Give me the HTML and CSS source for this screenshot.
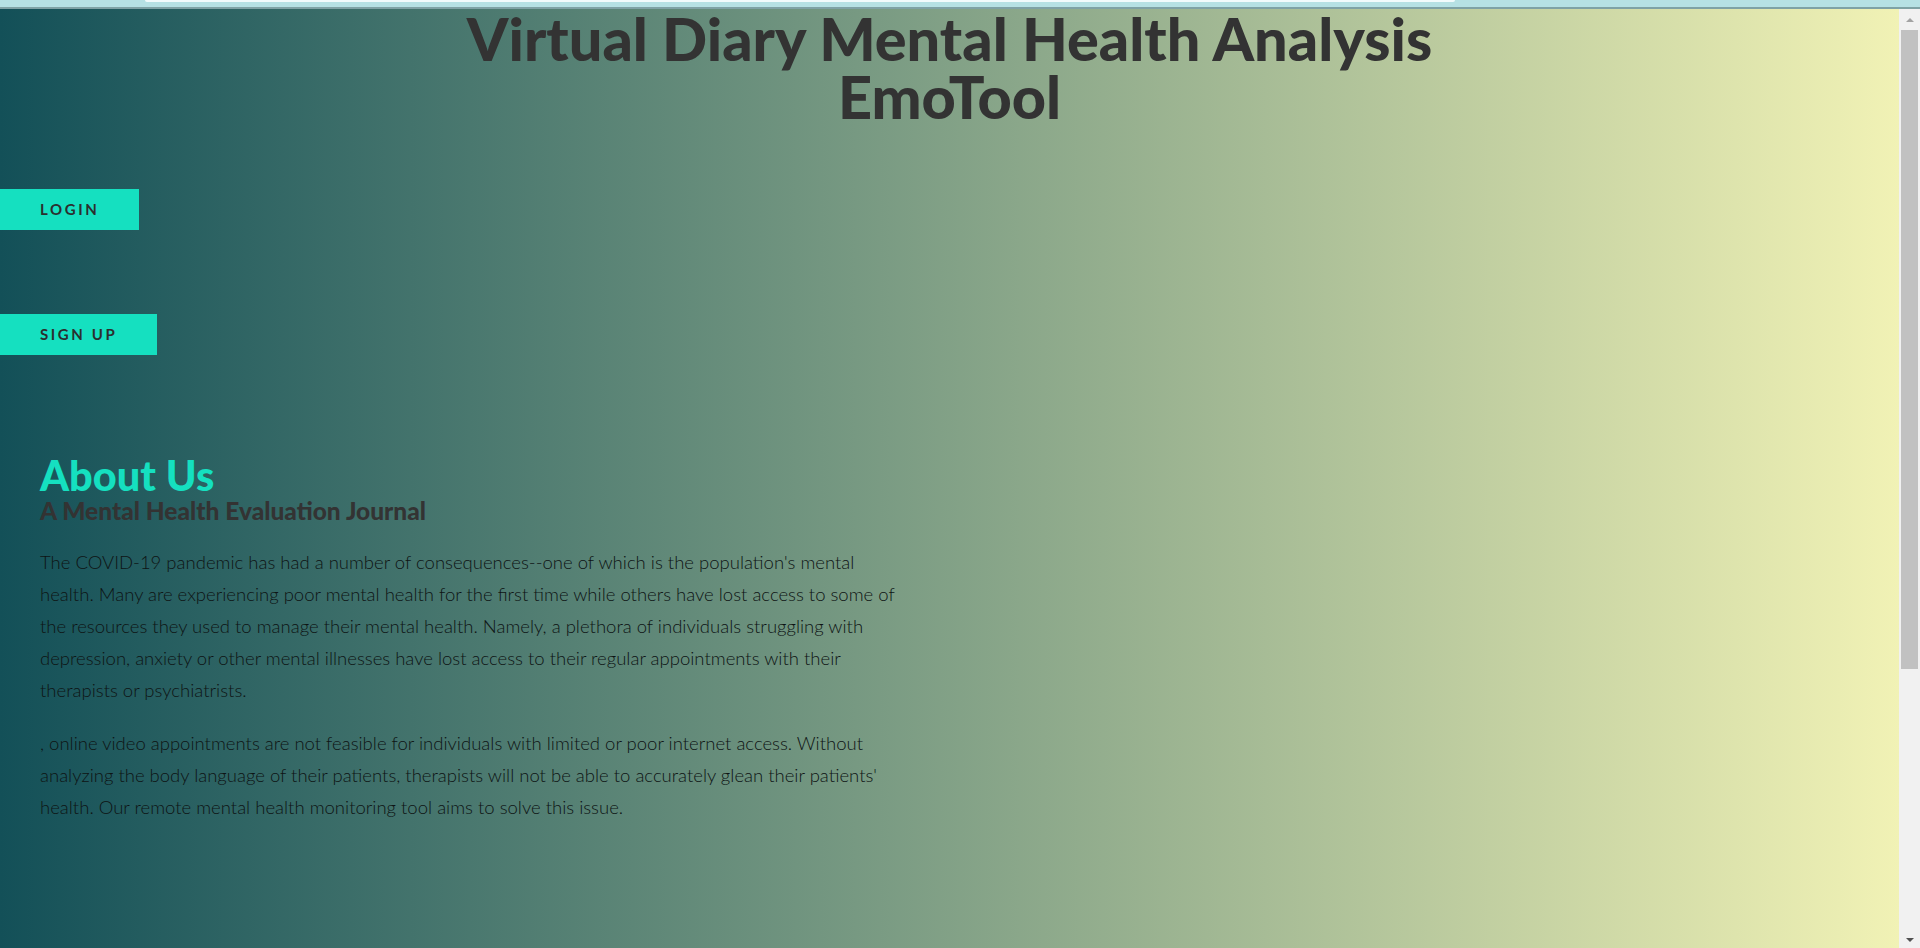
FILE: index.html
```html
<!DOCTYPE html>
<html lang="en">
<head>
<meta charset="utf-8">
<title>EmoTool</title>
<link rel="stylesheet" href="styles.css">
</head>
<body>
<div class="chrome"><div class="chrome-field"></div></div>
<div class="frame">
  <main class="page">
    <h1 class="title"><span class="title-line">Virtual Diary Mental Health Analysis</span><span class="title-line">EmoTool</span></h1>
    <nav class="actions">
      <a class="btn" href="#">Login</a>
      <a class="btn" href="#">Sign Up</a>
    </nav>
    <section class="about">
      <h2 class="about-title">About Us</h2>
      <h3 class="about-sub">A Mental Health Evaluation Journal</h3>
      <p>The COVID-19 pandemic has had a number of consequences--one of which is the population's mental health. Many are experiencing poor mental health for the first time while others have lost access to some of the resources they used to manage their mental health. Namely, a plethora of individuals struggling with depression, anxiety or other mental illnesses have lost access to their regular appointments with their therapists or psychiatrists.</p>
      <p>, online video appointments are not feasible for individuals with limited or poor internet access. Without analyzing the body language of their patients, therapists will not be able to accurately glean their patients' health. Our remote mental health monitoring tool aims to solve this issue.</p>
    </section>
  </main>
  <div class="scrollbar">
    <div class="sb-arrow sb-up"></div>
    <div class="sb-thumb"></div>
    <div class="sb-space"></div>
    <div class="sb-arrow sb-down"></div>
  </div>
</div>
</body>
</html>
```
FILE: styles.css
```css
html, body {
  margin: 0;
  padding: 0;
  height: 100%;
  overflow: hidden;
}
body {
  font-family: "Lato", "Open Sans", sans-serif;
  color: #333;
  display: flex;
  flex-direction: column;
}
.chrome {
  height: 7px;
  background: #b6e1e4;
  border-bottom: 2px solid #7fa2a5;
  display: flex;
  padding-left: 145px;
}
.chrome-field {
  width: 1310px;
  height: 2px;
  background: #f2fbfc;
  border-radius: 0 0 3px 3px;
}
.frame {
  flex: 1;
  display: flex;
  min-height: 0;
}
.page {
  flex: 1;
  background: linear-gradient(to right, #135058, #f1f2b5);
  overflow: hidden;
}
.title {
  margin: 0;
  display: flex;
  flex-direction: column;
  align-items: center;
  font-size: 59.4px;
  font-weight: 900;
  color: #333;
}
.title-line {
  display: block;
  line-height: 58px;
}
.actions {
  display: flex;
  flex-direction: column;
  align-items: flex-start;
  gap: 84px;
  margin-top: 64px;
}
.btn {
  display: block;
  background: #15e0c0;
  color: #2b2f2f;
  text-decoration: none;
  text-transform: uppercase;
  font-weight: 700;
  font-size: 15px;
  letter-spacing: 2.6px;
  line-height: 19px;
  padding: 11px 40px;
}
.about {
  width: 869px;
  padding: 0 40px;
  margin-top: 100px;
}
.about-title {
  margin: 0;
  font-size: 41.5px;
  line-height: 41px;
  font-weight: 900;
  color: #15e0c0;
}
.about-sub {
  margin: 0 0 20px;
  font-size: 24.5px;
  line-height: 30px;
  font-weight: 900;
  color: #333;
}
.about p {
  margin: 0 0 21px;
  font-size: 18.5px;
  line-height: 32px;
  font-weight: 300;
  color: #0e1414;
}
.scrollbar {
  width: 21px;
  background: #f1f1f1;
  display: flex;
  flex-direction: column;
  align-items: center;
}
.sb-arrow {
  width: 0;
  height: 0;
  border-left: 4px solid transparent;
  border-right: 4px solid transparent;
}
.sb-up {
  margin-top: 9px;
  border-bottom: 4px solid #a3a3a3;
}
.sb-thumb {
  margin-top: 8px;
  width: 17px;
  height: 639px;
  background: #c1c1c1;
}
.sb-space {
  flex: 1;
}
.sb-down {
  margin-bottom: 6px;
  border-top: 4px solid #505050;
}
```
